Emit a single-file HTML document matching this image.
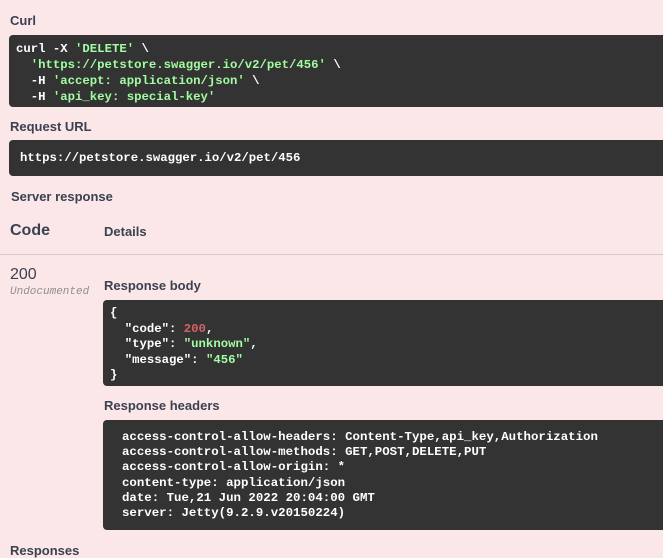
<!DOCTYPE html>
<html><head><meta charset="utf-8"><style>
*{margin:0;padding:0;box-sizing:border-box}
body{width:663px;height:547px;overflow:hidden;background:#fbe7e7;font-family:"Liberation Sans",sans-serif;color:#3b4151;position:relative}
.a{position:absolute}
.lbl{font-size:13px;font-weight:bold}
.box{background:#333;border-radius:4px;color:#fff;font-family:"Liberation Mono",monospace;font-size:12.3px;font-weight:bold;white-space:pre;line-height:16px}
.g{color:#a2fca2}.r{color:#d36363}
</style></head><body>
<div class="a lbl" style="left:10px;top:13px">Curl</div>
<div class="a box" style="left:9px;top:35px;width:660px;height:72px;padding:6px 7px">curl -X <span class="g">'DELETE'</span> \
  <span class="g">'https://petstore.swagger.io/v2/pet/456'</span> \
  -H <span class="g">'accept: application/json'</span> \
  -H <span class="g">'api_key: special-key'</span></div>
<div class="a lbl" style="left:10px;top:119px">Request URL</div>
<div class="a box" style="left:9px;top:140px;width:660px;height:36px;padding:10px 11px">https://petstore.swagger.io/v2/pet/456</div>
<div class="a lbl" style="left:11px;top:189px">Server response</div>
<div class="a" style="left:10px;top:222px;font-size:16px;font-weight:bold">Code</div>
<div class="a lbl" style="left:104px;top:224px">Details</div>
<div class="a" style="left:0;top:254px;width:663px;height:1px;background:#d8c8c8"></div>
<div class="a" style="left:10px;top:266px;font-size:16px">200</div>
<div class="a" style="left:10px;top:286px;font-size:11px;font-style:italic;font-family:'Liberation Mono',monospace;color:#909090">Undocumented</div>
<div class="a lbl" style="left:104px;top:278px">Response body</div>
<div class="a box" style="left:103px;top:300px;width:570px;height:86px;padding:6px 7px;line-height:15.5px">{
  "code": <span class="r">200</span>,
  "type": <span class="g">"unknown"</span>,
  "message": <span class="g">"456"</span>
}</div>
<div class="a lbl" style="left:104px;top:398px">Response headers</div>
<div class="a box" style="left:103px;top:420px;width:570px;height:110px;padding:10px 19px;line-height:15.2px;font-size:12.4px">access-control-allow-headers: Content-Type,api_key,Authorization
access-control-allow-methods: GET,POST,DELETE,PUT
access-control-allow-origin: *
content-type: application/json
date: Tue,21 Jun 2022 20:04:00 GMT
server: Jetty(9.2.9.v20150224)</div>
<div class="a lbl" style="left:10px;top:543px">Responses</div>
</body></html>
